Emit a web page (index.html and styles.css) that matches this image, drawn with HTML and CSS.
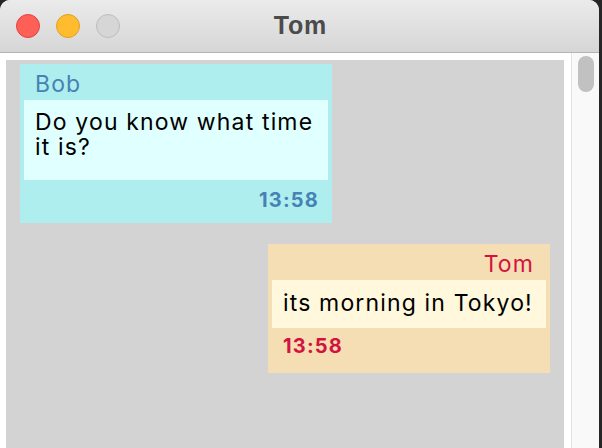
FILE: index.html
```html
<!DOCTYPE html>
<html>
<head>
<meta charset="utf-8">
<link rel="stylesheet" href="styles.css">
</head>
<body>
<div class="window">
  <div class="titlebar">
    <div class="lights">
      <span class="light red"></span>
      <span class="light yellow"></span>
      <span class="light gray"></span>
    </div>
    <div class="title">Tom</div>
  </div>
  <div class="content">
    <div class="pane">
      <div class="canvas">
        <div class="bubble bob">
          <div class="name">Bob</div>
          <div class="msg msg-two">Do you know what time it is?</div>
          <div class="time">13:58</div>
        </div>
        <div class="bubble tom">
          <div class="name">Tom</div>
          <div class="msg">its morning in Tokyo!</div>
          <div class="time">13:58</div>
        </div>
      </div>
    </div>
    <div class="scrollbar"><div class="thumb"></div></div>
  </div>
</div>
</body>
</html>
```
FILE: styles.css
```css
* {
  box-sizing: border-box;
}
html, body {
  margin: 0;
  padding: 0;
  height: 100%;
  background: #262626;
  overflow: hidden;
}
.window {
  width: 599px;
  height: 448px;
  display: flex;
  flex-direction: column;
  border-radius: 10px 10px 0 0;
  overflow: hidden;
  background: #ffffff;
}
.titlebar {
  height: 53px;
  flex: none;
  border-bottom: 1px solid #b4b4b4;
  background: linear-gradient(#ebebeb, #d6d6d6);
  display: flex;
  align-items: center;
  position: relative;
}
.lights {
  display: flex;
  gap: 16px;
  padding-left: 16px;
}
.light {
  width: 24px;
  height: 24px;
  border-radius: 50%;
  border: 1px solid transparent;
}
.red { background: #fe5f57; border-color: #e0443e; }
.yellow { background: #febc2e; border-color: #dea123; }
.gray { background: #d6d6d6; border-color: #bdbdbd; }
.title {
  position: absolute;
  left: 0;
  right: 0;
  top: 11px;
  text-align: center;
  padding-left: 2px;
  font-family: "Liberation Sans", Arial, sans-serif;
  font-weight: bold;
  font-size: 25px;
  letter-spacing: 0.8px;
  color: #4b4b4b;
}
.content {
  flex: 1;
  display: flex;
  min-height: 0;
}
.pane {
  flex: 1;
  padding: 7px 7px 0 6px;
  background: #ffffff;
  display: flex;
}
.canvas {
  flex: 1;
  background: #d3d3d3;
  padding: 4px 14px;
  display: flex;
  flex-direction: column;
  gap: 21px;
  font-family: Inter, "Noto Sans", sans-serif;
}
.scrollbar {
  width: 28px;
  flex: none;
  border-left: 1px solid #e3e3e3;
  background: #f9f9f9;
  padding: 3px 0 0 6px;
}
.thumb {
  width: 16px;
  height: 36px;
  border-radius: 8px;
  background: #c1c1c1;
}
.bubble {
  display: flex;
  flex-direction: column;
  padding: 0 4px;
}
.bob {
  align-self: flex-start;
  width: 312px;
  background: #afeeee;
}
.tom {
  align-self: flex-end;
  width: 282px;
  background: #f5deb3;
}
.name {
  font-size: 23px;
  line-height: 24px;
  letter-spacing: 1.1px;
  padding: 8px 11px 4px;
}
.bob .name { color: #4682b4; }
.tom .name { color: #d2133f; text-align: right; padding-right: 12px; }
.msg {
  font-size: 23px;
  line-height: 25px;
  letter-spacing: 1.15px;
  color: #000000;
  padding: 11px 6px 12px 11px;
}
.msg-two { padding-top: 10px; padding-bottom: 20px; }
.bob .msg { background: #e0ffff; }
.tom .msg { background: #fff8dc; }
.time {
  font-size: 20px;
  font-weight: bold;
  line-height: 22px;
  padding: 9px 11px 12px;
  letter-spacing: 1.2px;
}
.bob .time { color: #4682b4; text-align: right; padding-right: 9px; }
.tom .time { color: #d2133f; padding-top: 7px; padding-bottom: 16px; }
```
